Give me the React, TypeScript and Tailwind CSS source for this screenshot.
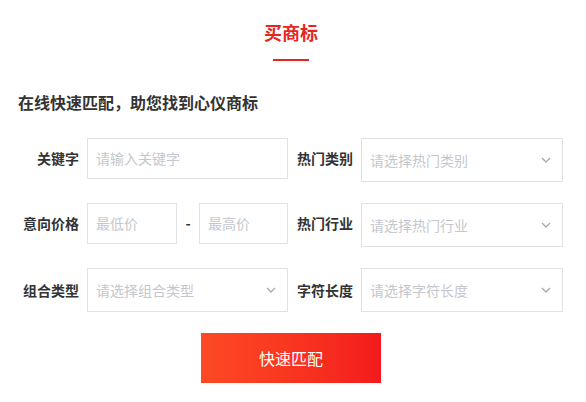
import React from 'react';

const font = { fontFamily: '"Noto Sans CJK SC", "Noto Sans", sans-serif' };

const Chevron = () => (
  <svg width="10" height="6" viewBox="0 0 10 6" className="shrink-0">
    <polyline points="1,1 5,5 9,1" fill="none" stroke="#a3a8b6" strokeWidth="1.3" />
  </svg>
);

const Label: React.FC<{ text: string; className: string }> = ({ text, className }) => (
  <div className={`h-[41px] flex items-center justify-end text-[14px] font-bold text-[#333] shrink-0 ${className}`}>
    {text}
  </div>
);

const Input: React.FC<{ placeholder: string; className: string }> = ({ placeholder, className }) => (
  <div className={`h-[41px] border border-[#e0e2e7] flex items-center pl-[8px] text-[14px] text-[#c4c7ce] shrink-0 ${className}`}>
    {placeholder}
  </div>
);

const Select: React.FC<{ placeholder: string; className: string }> = ({ placeholder, className }) => (
  <div className={`h-[44px] border border-[#e0e2e7] flex items-center justify-between pl-[8px] pr-[11px] text-[14px] text-[#c4c7ce] shrink-0 ${className}`}>
    <span>{placeholder}</span>
    <Chevron />
  </div>
);

export default function App() {
  return (
    <div className="w-[586px] h-[402px] bg-white overflow-hidden" style={font}>
      {/* Header */}
      <div className="pt-[20px] pr-[4px] flex flex-col items-center">
        <h1 className="text-[18px] leading-[24px] font-bold text-[#e5261f]">买商标</h1>
        <div className="mt-[15px] w-[36px] h-[2px] bg-[#e5261f]" />
      </div>

      {/* Subtitle */}
      <p className="mt-[29px] pl-[18px] text-[16px] leading-[24px] font-bold text-[#333]">
        在线快速匹配，助您找到心仪商标
      </p>

      {/* Form */}
      <div className="mt-[24px] pl-[17px] flex flex-col gap-[21px]">
        <div className="flex items-start">
          <Label text="关键字" className="w-[62px]" />
          <Input placeholder="请输入关键字" className="ml-[8px] w-[201px]" />
          <Label text="热门类别" className="ml-[9px] w-[56px]" />
          <Select placeholder="请选择热门类别" className="ml-[8px] w-[202px]" />
        </div>

        <div className="flex items-start">
          <Label text="意向价格" className="w-[62px]" />
          <div className="ml-[8px] w-[201px] flex items-center shrink-0">
            <Input placeholder="最低价" className="w-[90px]" />
            <span className="w-[22px] text-center text-[14px] font-bold text-[#333]">-</span>
            <Input placeholder="最高价" className="w-[89px]" />
          </div>
          <Label text="热门行业" className="ml-[9px] w-[56px]" />
          <Select placeholder="请选择热门行业" className="ml-[8px] w-[202px]" />
        </div>

        <div className="flex items-start">
          <Label text="组合类型" className="w-[62px] h-[44px]" />
          <Select placeholder="请选择组合类型" className="ml-[8px] w-[201px]" />
          <Label text="字符长度" className="ml-[9px] w-[56px] h-[44px]" />
          <Select placeholder="请选择字符长度" className="ml-[8px] w-[202px]" />
        </div>
      </div>

      {/* Button */}
      <div className="mt-[21px] pr-[4px] flex justify-center">
        <button className="w-[180px] h-[50px] bg-gradient-to-r from-[#fd4924] to-[#f4191c] text-white text-[16px]">
          快速匹配
        </button>
      </div>
    </div>
  );
}
